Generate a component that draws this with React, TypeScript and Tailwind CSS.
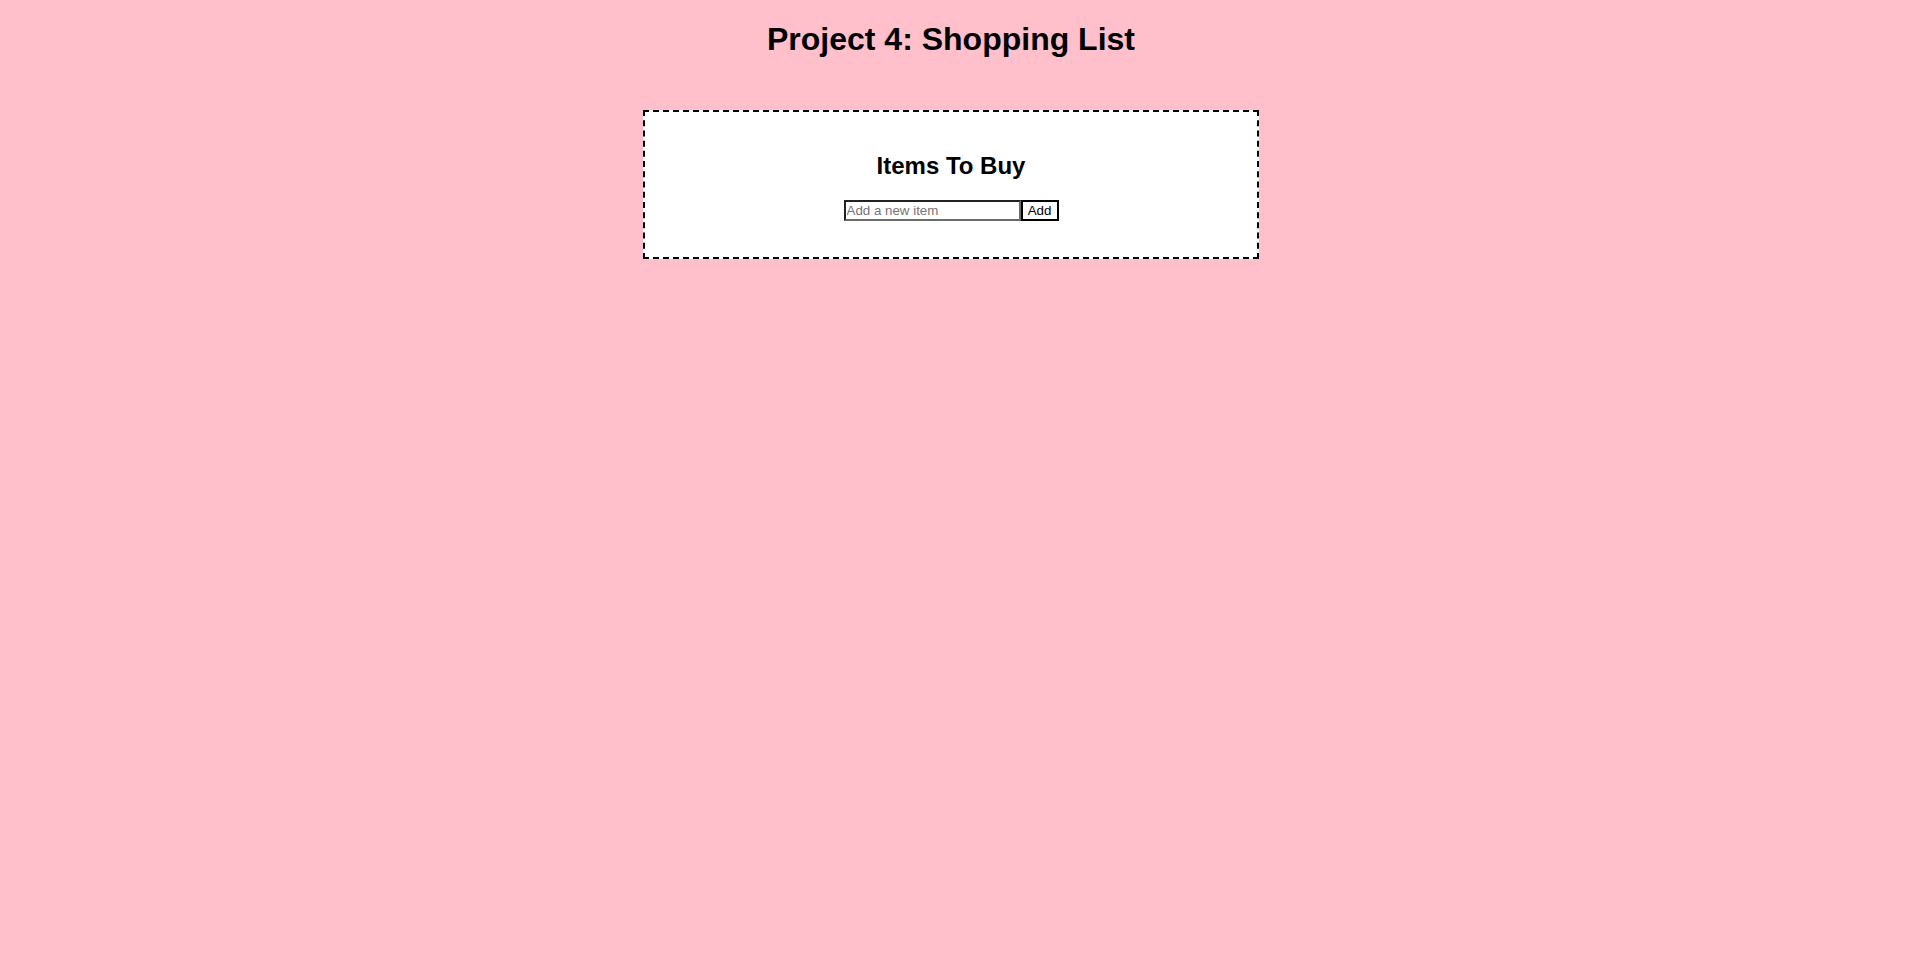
import React, { useState } from "react";

export default function App() {
  const [items, setItems] = useState<string[]>([]);
  const [value, setValue] = useState("");
  const add = () => {
    if (value.trim()) {
      setItems([...items, value.trim()]);
      setValue("");
    }
  };
  return (
    <div className="min-h-[953px] bg-[#ffc0cb] pt-[21px] pr-[8px] font-['Liberation_Sans',Arial,sans-serif] text-black">
      <h1 className="text-center text-[32px] font-bold leading-[37px]">Project 4: Shopping List</h1>
      <div className="mx-auto mt-[52px] w-[616px] border-2 border-dashed border-black bg-white pt-[40px] pb-[36px]">
        <h2 className="text-center text-[24px] font-bold leading-[28px]">Items To Buy</h2>
        <div className="mt-[20px] flex justify-center">
          <input
            value={value}
            onChange={(e) => setValue(e.target.value)}
            placeholder="Add a new item"
            className="h-[21px] w-[177px] border-2 border-t-[#222] border-l-[#222] border-b-[#6b6b6b] border-r-[#6b6b6b] bg-white px-[1px] text-[13.33px] leading-[15px] text-black outline-none placeholder:text-[#757575]"
          />
          <button
            onClick={add}
            className="h-[21px] w-[38px] border-2 border-black bg-white text-center text-[13.33px] leading-[15px] text-black"
          >
            Add
          </button>
        </div>
        {items.length > 0 && (
          <ul className="mt-4 list-disc pl-10">
            {items.map((it, i) => (
              <li key={i}>{it}</li>
            ))}
          </ul>
        )}
      </div>
    </div>
  );
}
